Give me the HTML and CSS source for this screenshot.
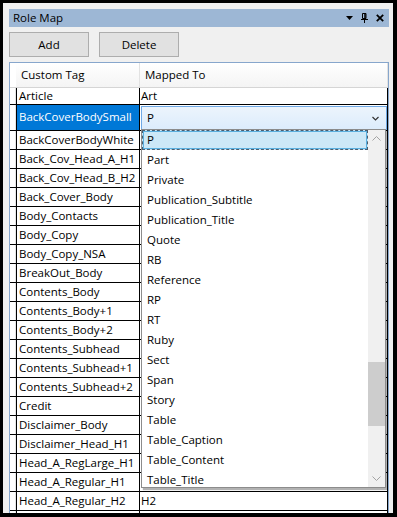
FILE: index.html
```html
<!DOCTYPE html>
<html lang="en">
<head>
    <meta charset="UTF-8">
    <title>Role Map</title>
    <link rel="stylesheet" href="styles.css">
</head>
<body>
    <div class="window">
        <div class="panel">
            <div class="titlebar">
                <span class="title">Role Map</span>
                <div class="tools">
                    <svg width="7" height="4" viewBox="0 0 7 4"><path d="M0 0h7L3.5 4z" fill="#000"/></svg>
                    <svg width="7" height="10" viewBox="0 0 7 10"><path d="M1.5 0.5h3.5v5h-3.5z" fill="none" stroke="#000"/><path d="M4 0v6" stroke="#000" stroke-width="1.5"/><path d="M0 6.5h7M3.5 7v3" stroke="#000"/></svg>
                    <svg width="8" height="8" viewBox="0 0 8 8"><path d="M0.8 0.8l6.4 6.4M7.2 0.8l-6.4 6.4" stroke="#000" stroke-width="1.8"/></svg>
                </div>
            </div>

            <div class="toolbar">
                <button class="btn">Add</button>
                <button class="btn">Delete</button>
            </div>

            <div class="grid">
                <div class="row head">
                    <div class="rh"></div>
                    <div class="cell c1">Custom Tag</div>
                    <div class="cell c2">Mapped To</div>
                </div>
                <div class="row first">
                    <div class="rh"></div>
                    <div class="cell c1">Article</div>
                    <div class="cell c2">Art</div>
                </div>
                <div class="row selected">
                    <div class="rh"></div>
                    <div class="cell c1">BackCoverBodySmall</div>
                    <div class="cell c2">
                        <div class="combo">
                            <span>P</span>
                            <svg width="7" height="5" viewBox="0 0 7 5"><path d="M0.5 1l3 3 3-3" fill="none" stroke="#333" stroke-width="1.2"/></svg>
                        </div>
                    </div>
                </div>
                <div class="row"><div class="rh"></div><div class="cell c1">BackCoverBodyWhite</div><div class="cell c2"></div></div>
                <div class="row"><div class="rh"></div><div class="cell c1">Back_Cov_Head_A_H1</div><div class="cell c2"></div></div>
                <div class="row"><div class="rh"></div><div class="cell c1">Back_Cov_Head_B_H2</div><div class="cell c2"></div></div>
                <div class="row"><div class="rh"></div><div class="cell c1">Back_Cover_Body</div><div class="cell c2"></div></div>
                <div class="row"><div class="rh"></div><div class="cell c1">Body_Contacts</div><div class="cell c2"></div></div>
                <div class="row"><div class="rh"></div><div class="cell c1">Body_Copy</div><div class="cell c2"></div></div>
                <div class="row"><div class="rh"></div><div class="cell c1">Body_Copy_NSA</div><div class="cell c2"></div></div>
                <div class="row"><div class="rh"></div><div class="cell c1">BreakOut_Body</div><div class="cell c2"></div></div>
                <div class="row"><div class="rh"></div><div class="cell c1">Contents_Body</div><div class="cell c2"></div></div>
                <div class="row"><div class="rh"></div><div class="cell c1">Contents_Body+1</div><div class="cell c2"></div></div>
                <div class="row"><div class="rh"></div><div class="cell c1">Contents_Body+2</div><div class="cell c2"></div></div>
                <div class="row"><div class="rh"></div><div class="cell c1">Contents_Subhead</div><div class="cell c2"></div></div>
                <div class="row"><div class="rh"></div><div class="cell c1">Contents_Subhead+1</div><div class="cell c2"></div></div>
                <div class="row"><div class="rh"></div><div class="cell c1">Contents_Subhead+2</div><div class="cell c2"></div></div>
                <div class="row"><div class="rh"></div><div class="cell c1">Credit</div><div class="cell c2"></div></div>
                <div class="row"><div class="rh"></div><div class="cell c1">Disclaimer_Body</div><div class="cell c2"></div></div>
                <div class="row"><div class="rh"></div><div class="cell c1">Disclaimer_Head_H1</div><div class="cell c2"></div></div>
                <div class="row"><div class="rh"></div><div class="cell c1">Head_A_RegLarge_H1</div><div class="cell c2"></div></div>
                <div class="row"><div class="rh"></div><div class="cell c1">Head_A_Regular_H1</div><div class="cell c2"></div></div>
                <div class="row"><div class="rh"></div><div class="cell c1">Head_A_Regular_H2</div><div class="cell c2">H2</div></div>
                <div class="row"><div class="rh"></div><div class="cell c1"></div><div class="cell c2"></div></div>

                <div class="dropdown">
                    <ul class="options">
                        <li class="current">P</li>
                        <li>Part</li>
                        <li>Private</li>
                        <li>Publication_Subtitle</li>
                        <li>Publication_Title</li>
                        <li>Quote</li>
                        <li>RB</li>
                        <li>Reference</li>
                        <li>RP</li>
                        <li>RT</li>
                        <li>Ruby</li>
                        <li>Sect</li>
                        <li>Span</li>
                        <li>Story</li>
                        <li>Table</li>
                        <li>Table_Caption</li>
                        <li>Table_Content</li>
                        <li>Table_Title</li>
                    </ul>
                    <div class="scrollbar">
                        <div class="arrow">
                            <svg width="9" height="5" viewBox="0 0 9 5"><path d="M0.5 4.5l4-4 4 4" fill="none" stroke="#a3a3a3"/></svg>
                        </div>
                        <div class="track"><div class="thumb"></div></div>
                        <div class="arrow">
                            <svg width="9" height="5" viewBox="0 0 9 5"><path d="M0.5 0.5l4 4 4-4" fill="none" stroke="#a3a3a3"/></svg>
                        </div>
                    </div>
                </div>
            </div>
        </div>
    </div>
</body>
</html>
```

FILE: styles.css
```css
body {
    margin: 0;
    background: #000;
    font-family: 'Open Sans', 'Noto Sans', sans-serif;
    font-size: 11.5px;
    color: #000;
}

.window {
    width: 390px;
    height: 510px;
    padding: 3px 4px 4px 3px;
}

.panel {
    height: 504px;
    padding: 6px 4px 0 6px;
    background: #f0f0f0;
    overflow: hidden;
}

.titlebar {
    height: 18px;
    display: flex;
    align-items: center;
    justify-content: space-between;
    background: #9db7d5;
    padding: 0 5px 0 4px;
}

.title {
    line-height: 18px;
}

.tools {
    display: flex;
    align-items: center;
    gap: 8px;
}

.tools svg {
    display: block;
}

.toolbar {
    display: flex;
    gap: 10px;
    margin-top: 5px;
}

.btn {
    width: 80px;
    height: 25px;
    padding: 0;
    background: #e1e1e1;
    border: 1px solid #adadad;
    font-family: inherit;
    font-size: 11.5px;
    color: #000;
}

.grid {
    position: relative;
    margin-top: 5px;
    border: 1px solid #87a6cc;
    background: #fff;
    height: 460px;
    overflow: hidden;
}

.row {
    display: flex;
    height: 18px;
    border-bottom: 1px solid #000;
    line-height: 18px;
}

.rh {
    width: 5px;
    border-right: 1px solid #e4e4e4;
    background: #fff;
}

.cell {
    white-space: nowrap;
    overflow: hidden;
    border-right: 1px solid #000;
}

.c1 {
    width: 120px;
    padding-left: 2px;
    border-left: 1px solid #000;
}

.c2 {
    width: 246px;
    padding-left: 1px;
}

.row.head {
    height: 24px;
    line-height: 24px;
    border-bottom: 1px solid #d5d5d5;
    background: linear-gradient(#fff, #f4f4f4);
}

.row.head .rh {
    border-right: 1px solid #fff;
}

.row.head .cell {
    border-color: #e2e2e2;
}

.row.head .c1 {
    width: 118px;
    padding-left: 4px;
    border-left-color: transparent;
}

.row.head .c2 {
    width: 242px;
    padding-left: 5px;
}

.row.first {
    height: 16px;
    line-height: 16px;
}

.row.selected {
    height: 25px;
    line-height: 24px;
}

.row.selected .c1 {
    background: #0078d7;
    color: #fff;
}

.combo {
    display: flex;
    align-items: center;
    justify-content: space-between;
    height: 22px;
    margin: 1px 0 0 0;
    padding: 0 7px 0 5px;
    border: 1px solid #6fa9e6;
    background: linear-gradient(#ecf4fc, #dcecfc);
    line-height: 22px;
}

.combo svg {
    display: block;
}

.dropdown {
    position: absolute;
    left: 131px;
    top: 66px;
    width: 243px;
    height: 357px;
    display: flex;
    border: 1px solid #8c8c8c;
    background: #fff;
    box-shadow: 2px 2px 1px rgba(0, 0, 0, 0.3);
}

.options {
    flex: 1;
    margin: 0;
    padding: 0;
    list-style: none;
    overflow: hidden;
}

.options li {
    height: 20px;
    line-height: 20px;
    padding-left: 5px;
    white-space: nowrap;
}

.options li.current {
    height: 18px;
    line-height: 18px;
    padding-left: 4px;
    border: 1px dashed #4b5d6e;
    background: #cce8f7;
    box-shadow: 0 0 0 1px #5ab0e0 inset;
}

.scrollbar {
    width: 17px;
    display: flex;
    flex-direction: column;
    background: #f0f0f0;
}

.arrow {
    height: 17px;
    display: flex;
    align-items: center;
    justify-content: center;
}

.arrow svg {
    display: block;
}

.track {
    flex: 1;
}

.thumb {
    margin-top: 215px;
    height: 64px;
    background: #cdcdcd;
}
```
